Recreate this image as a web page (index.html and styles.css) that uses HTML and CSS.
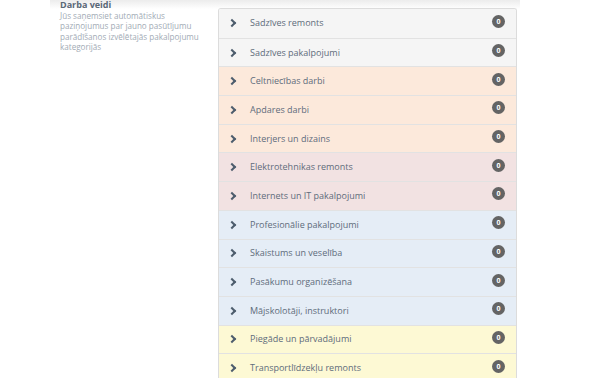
FILE: index.html
```html
<!DOCTYPE html>
<html lang="lv">
<head>
  <meta charset="UTF-8" />
  <title>Darba veidi</title>
  <meta name="viewport" content="width=device-width, initial-scale=1" />
  <link rel="stylesheet" href="styles.css">
</head>
<body>
  <div class="panel">
    <div class="intro">
      <h3>Darba veidi</h3>
      <p>Jūs saņemsiet automātiskus paziņojumus par jauno pasūtījumu parādīšanos izvēlētajās pakalpojumu kategorijās</p>
    </div>

    <ul class="categories">
      <li class="grey"><span class="chev"></span><span class="name">Sadzīves remonts</span><span class="badge">0</span></li>
      <li class="grey"><span class="chev"></span><span class="name">Sadzīves pakalpojumi</span><span class="badge">0</span></li>
      <li class="peach"><span class="chev"></span><span class="name">Celtniecības darbi</span><span class="badge">0</span></li>
      <li class="peach"><span class="chev"></span><span class="name">Apdares darbi</span><span class="badge">0</span></li>
      <li class="peach"><span class="chev"></span><span class="name">Interjers un dizains</span><span class="badge">0</span></li>
      <li class="pink"><span class="chev"></span><span class="name">Elektrotehnikas remonts</span><span class="badge">0</span></li>
      <li class="pink"><span class="chev"></span><span class="name">Internets un IT pakalpojumi</span><span class="badge">0</span></li>
      <li class="blue"><span class="chev"></span><span class="name">Profesionālie pakalpojumi</span><span class="badge">0</span></li>
      <li class="blue"><span class="chev"></span><span class="name">Skaistums un veselība</span><span class="badge">0</span></li>
      <li class="blue"><span class="chev"></span><span class="name">Pasākumu organizēšana</span><span class="badge">0</span></li>
      <li class="blue"><span class="chev"></span><span class="name">Mājskolotāji, instruktori</span><span class="badge">0</span></li>
      <li class="yellow"><span class="chev"></span><span class="name">Piegāde un pārvadājumi</span><span class="badge">0</span></li>
      <li class="yellow"><span class="chev"></span><span class="name">Transportlīdzekļu remonts</span><span class="badge">0</span></li>
    </ul>
  </div>
</body>
</html>
```

FILE: styles.css
```css
body {
  margin: 0;
  font-family: "Open Sans", Arial, sans-serif;
  background: #fff;
  overflow: hidden;
}
.panel {
  margin-left: 50px;
  width: 470px;
  display: flex;
  background: linear-gradient(#ececec, #fff 9px);
}
.intro {
  width: 168px;
  flex-shrink: 0;
  padding-left: 10px;
  box-sizing: border-box;
}
.intro h3 {
  margin: 0;
  font-size: 9px;
  font-weight: bold;
  color: #5a6877;
  line-height: 10.5px;
}
.intro p {
  margin: 0;
  width: 145px;
  font-size: 8.1px;
  line-height: 10.5px;
  color: #a2abb5;
}
.categories {
  list-style: none;
  margin: 8px 0 0;
  padding: 0;
  width: 299px;
  box-sizing: border-box;
  border: 1px solid #dcdcdc;
  border-bottom: none;
  border-radius: 3px 3px 0 0;
  overflow: hidden;
}
.categories li {
  display: flex;
  align-items: center;
  height: 27.7px;
  border-top: 1px solid #e2e2e2;
  font-size: 9px;
  color: #5e6c7b;
}
.categories li:first-child {
  border-top: none;
  height: 28.7px;
}
.grey { background: #f5f5f5; }
.peach { background: #fce9db; }
.pink { background: #f2e2e2; }
.blue { background: #e5edf6; }
.yellow { background: #fdf9d4; }
.chev {
  width: 4px;
  height: 4px;
  margin: 0 0 0 10px;
  border-right: 2px solid #4d5d6d;
  border-bottom: 2px solid #4d5d6d;
  transform: rotate(-45deg);
}
.name {
  flex: 1;
  margin-left: 15px;
  padding-bottom: 1px;
}
.badge {
  width: 13px;
  height: 13px;
  margin: -4px 11px 0 0;
  border-radius: 50%;
  background: #646464;
  color: #fff;
  font-size: 7px;
  font-weight: bold;
  line-height: 13px;
  text-align: center;
}
```
